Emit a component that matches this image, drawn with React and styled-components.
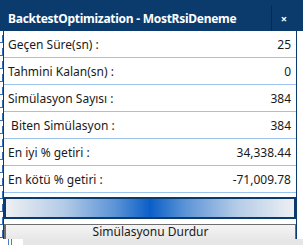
import styled, { createGlobalStyle } from 'styled-components';

const GlobalStyle = createGlobalStyle`
  html, body {
    margin: 0;
    padding: 0;
    background: #ffffff;
  }
  body {
    font-family: "Noto Sans", "Open Sans", sans-serif;
  }
`;

const NAVY = '#0b3a6d';

const Desktop = styled.div`
  position: relative;
  width: 303px;
  height: 245px;
  overflow: hidden;
  background: #ffffff;
`;

const BackWindow = styled.div`
  display: flex;
  flex-direction: column;
  width: 100%;
  height: 100%;
`;

const BackHeader = styled.div`
  height: 31px;
  flex-shrink: 0;
  background: ${NAVY};
`;

const BackBody = styled.div`
  flex: 1;
  display: flex;
`;

const GlyphColumn = styled.div`
  width: 3px;
  display: flex;
  flex-direction: column;
  gap: 5px;
  padding-top: 4px;
  overflow: hidden;
`;

const Glyph = styled.span`
  width: 3px;
  height: 8px;
  flex-shrink: 0;
  box-sizing: border-box;
  border-right: 1px solid #3a6fb2;
  border-bottom: 1px solid #3a6fb2;
`;

const BackContent = styled.div`
  flex: 1;
`;

const BackFooter = styled.div`
  height: 6px;
  flex-shrink: 0;
  display: flex;
`;

const FooterGap = styled.div`
  width: 15px;
  padding-left: 5px;
  display: flex;
  gap: 2px;
`;

const Tick = styled.span`
  width: 1px;
  height: 6px;
  background: #4a7fc0;
`;

const FooterGray = styled.div`
  flex: 1;
  background: #e6e6e6;
`;

const Dialog = styled.div`
  position: absolute;
  left: 3px;
  top: 5px;
  width: 294px;
  height: 234px;
  box-sizing: border-box;
  border-left: 1px solid ${NAVY};
  border-right: 1px solid ${NAVY};
  background: #ffffff;
  display: flex;
  flex-direction: column;
  overflow: hidden;
`;

const TitleBar = styled.div`
  height: 26px;
  flex-shrink: 0;
  background: ${NAVY};
  display: flex;
  align-items: center;
  color: #ffffff;
`;

const Title = styled.div`
  flex: 1;
  padding-left: 4px;
  font-weight: 700;
  font-size: 12px;
  letter-spacing: -0.27px;
`;

const CloseButton = styled.div`
  width: 24px;
  height: 26px;
  border-left: 1px solid #052a55;
  display: flex;
  align-items: center;
  justify-content: center;
  font-size: 11px;
  font-weight: 700;
`;

const Row = styled.div`
  height: 26px;
  flex-shrink: 0;
  border-bottom: 1px solid #9cc3ec;
  display: flex;
  align-items: center;
  justify-content: space-between;
  padding: 0 5px 0 4px;
  font-size: 12px;
  color: #1a1a1a;
`;

const Label = styled.span`
  white-space: pre;
`;

const Value = styled.span``;

const Progress = styled.div`
  height: 22px;
  flex-shrink: 0;
  margin-top: 4px;
  box-sizing: border-box;
  border: 2px solid ${NAVY};
  background: linear-gradient(
    to right,
    #eef0f3 0%,
    #b4cbe7 20%,
    #5b93d6 38%,
    #0a5fc8 50%,
    #5b93d6 62%,
    #b4cbe7 80%,
    #eef0f3 100%
  );
`;

const StopButton = styled.div`
  height: 18px;
  flex-shrink: 0;
  margin-top: 5px;
  box-sizing: border-box;
  border: 1px solid #6e6e6e;
  border-left-width: 2px;
  background: linear-gradient(#f4f4f4, #e6e6e6);
  text-align: center;
  font-size: 12px;
  line-height: 14px;
  color: #1a1a1a;
`;

const rows = [
  ['Geçen Süre(sn) :', '25'],
  ['Tahmini Kalan(sn) :', '0'],
  ['Simülasyon Sayısı :', '384'],
  [' Biten Simülasyon :', '384'],
  ['En iyi % getiri :', '34,338.44'],
  ['En kötü % getiri :', '-71,009.78'],
];

export default function App() {
  return (
    <>
      <GlobalStyle />
      <Desktop>
        <BackWindow>
          <BackHeader />
          <BackBody>
            <GlyphColumn>
              {Array.from({ length: 16 }).map((_, i) => (
                <Glyph key={i} />
              ))}
            </GlyphColumn>
            <BackContent />
          </BackBody>
          <BackFooter>
            <GlyphColumn />
            <FooterGap>
              <Tick />
              <Tick />
            </FooterGap>
            <FooterGray />
          </BackFooter>
        </BackWindow>

        <Dialog>
          <TitleBar>
            <Title>BacktestOptimization - MostRsiDeneme</Title>
            <CloseButton>×</CloseButton>
          </TitleBar>
          {rows.map(([label, value]) => (
            <Row key={label}>
              <Label>{label}</Label>
              <Value>{value}</Value>
            </Row>
          ))}
          <Progress />
          <StopButton>Simülasyonu Durdur</StopButton>
        </Dialog>
      </Desktop>
    </>
  );
}
